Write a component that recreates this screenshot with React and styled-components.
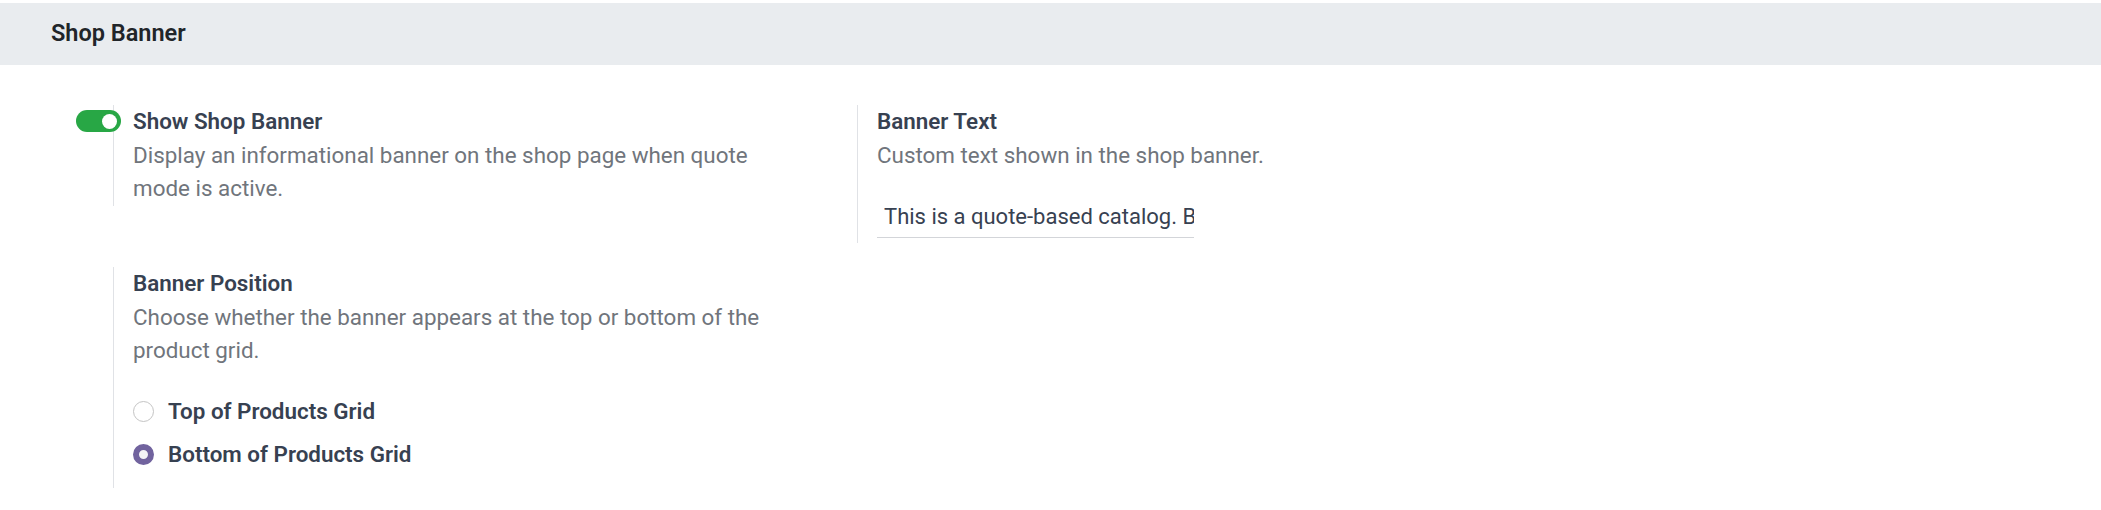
import styled, { createGlobalStyle } from "styled-components"

const GlobalStyle = createGlobalStyle`
	body {
		margin: 0;
		background: #fff;
		font-family: Roboto, "Noto Sans", sans-serif;
		font-size: 22.4px;
		line-height: 1.5;
	}
`

const settings = {
	showBanner: {
		title: "Show Shop Banner",
		help: "Display an informational banner on the shop page when quote mode is active.",
	},
	bannerText: {
		title: "Banner Text",
		help: "Custom text shown in the shop banner.",
		value: "This is a quote-based catalog. Browse products and request a quote.",
	},
	position: {
		title: "Banner Position",
		help: "Choose whether the banner appears at the top or bottom of the product grid.",
		options: [
			{ value: "top", label: "Top of Products Grid" },
			{ value: "bottom", label: "Bottom of Products Grid" },
		],
		selected: "bottom",
	},
}

export default function App() {
	const { showBanner, bannerText, position } = settings
	return (
		<Page>
			<GlobalStyle />
			<SectionHeader>Shop Banner</SectionHeader>
			<SettingsGrid>
				<SettingBox>
					<LeftPane>
						<Switch $on aria-label={showBanner.title} />
					</LeftPane>
					<RightPane>
						<Title>{showBanner.title}</Title>
						<Help>{showBanner.help}</Help>
					</RightPane>
				</SettingBox>

				<SettingBox>
					<LeftPane />
					<RightPane>
						<Title>{bannerText.title}</Title>
						<Help>{bannerText.help}</Help>
						<TextField>
							<input readOnly value={bannerText.value} />
						</TextField>
					</RightPane>
				</SettingBox>

				<SettingBox>
					<LeftPane />
					<RightPane $bottom="12px">
						<Title>{position.title}</Title>
						<Help>{position.help}</Help>
						<RadioList>
							{position.options.map((o) => (
								<RadioRow key={o.value}>
									<RadioDot $checked={o.value === position.selected} />
									{o.label}
								</RadioRow>
							))}
						</RadioList>
					</RightPane>
				</SettingBox>
			</SettingsGrid>
		</Page>
	)
}

const Page = styled.div`
	padding-top: 3px;
	min-height: 507px;
`

const SectionHeader = styled.div`
	height: 62px;
	display: flex;
	align-items: center;
	padding-left: 51px;
	background-color: #e9ecef;
	color: #212529;
	font-size: 23.5px;
	font-weight: 600;
`

const SettingsGrid = styled.div`
	display: grid;
	grid-template-columns: 744px 744px;
	row-gap: 24px;
	align-items: start;
	padding: 40px 0 0 76px;
`

const SettingBox = styled.div`
	display: flex;
`

const LeftPane = styled.div`
	flex: none;
	width: 37px;
	padding-top: 5px;
	position: relative;
	z-index: 1;
`

const RightPane = styled.div`
	flex: 1;
	border-left: 1px solid #e0e2e6;
	padding: 0 37px ${(p) => p.$bottom || "0"} 19px;
`

const Title = styled.div`
	color: #374151;
	font-weight: 600;
`

const Help = styled.div`
	color: #70757c;
`

const Switch = styled.div`
	width: 45px;
	height: 22px;
	border-radius: 11px;
	background-color: ${(p) => (p.$on ? "#28a745" : "#d1d5db")};
	position: relative;
	&::after {
		content: "";
		position: absolute;
		top: 3.5px;
		right: ${(p) => (p.$on ? "4px" : "26px")};
		width: 15px;
		height: 15px;
		border-radius: 50%;
		background: #fff;
	}
`

const TextField = styled.div`
	width: 317px;
	margin-top: 25px;
	border-bottom: 1px solid #d3d5d9;
	margin-bottom: 5px;
	input {
		display: block;
		width: 100%;
		box-sizing: border-box;
		border: none;
		outline: none;
		background: transparent;
		padding: 3px 0 4px 7px;
		font: inherit;
		font-size: 22px;
		line-height: 33px;
		color: #374151;
	}
`

const RadioList = styled.div`
	margin-top: 22px;
`

const RadioRow = styled.label`
	display: flex;
	align-items: center;
	gap: 14px;
	height: 43px;
	color: #374151;
	font-weight: 600;
`

const RadioDot = styled.span`
	flex: none;
	box-sizing: border-box;
	width: 21px;
	height: 21px;
	border-radius: 50%;
	border: ${(p) => (p.$checked ? "6.5px solid #71639e" : "1px solid #c4c4c4")};
	background: ${(p) => (p.$checked ? "#f4f4f6" : "#fff")};
`
